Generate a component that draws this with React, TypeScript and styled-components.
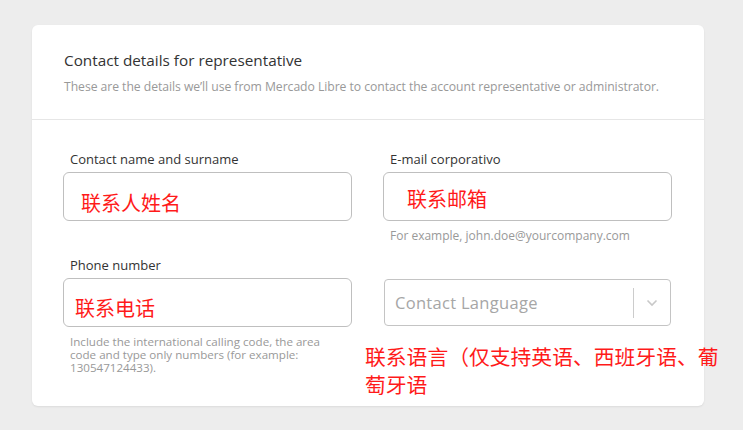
import styled, { createGlobalStyle } from "styled-components"

const GlobalStyle = createGlobalStyle`
    body {
        margin: 0;
        background: #ededed;
        font-family: "Open Sans", "Liberation Sans", sans-serif;
    }
`

const Page = styled.div`
    padding: 25px 39px 0 32px;
    min-height: 430px;
    box-sizing: border-box;
`

const Card = styled.section`
    width: 672px;
    background: #fff;
    border-radius: 6px;
    box-shadow: 0 1px 2px rgba(0, 0, 0, 0.08);
`

const Header = styled.header`
    padding: 25px 32px 24px;
    border-bottom: 1px solid #e6e6e6;
`

const Title = styled.h2`
    margin: 0;
    font-size: 15.3px;
    line-height: 20px;
    font-weight: 400;
    color: #333;
`

const Subtitle = styled.p`
    margin: 9px 0 0;
    font-size: 12.2px;
    line-height: 16px;
    color: #999;
    letter-spacing: -0.05px;
    white-space: nowrap;
`

const Body = styled.div`
    display: grid;
    grid-template-columns: 289px 289px;
    column-gap: 31px;
    row-gap: 15px;
    padding: 31px 32px 32px 31px;
`

const Field = styled.div`
    display: flex;
    flex-direction: column;
`

const Label = styled.label`
    font-size: 13px;
    color: #333;
    padding-left: 7px;
    line-height: 16px;
    margin-bottom: 5px;
`

const InputBox = styled.div<{ $indent: number; $drop: number }>`
    height: 49px;
    box-sizing: border-box;
    border: 1px solid #bfbfbf;
    border-radius: 6px;
    display: flex;
    align-items: center;
    padding: ${p => p.$drop}px 0 0 ${p => p.$indent}px;
`

const Value = styled.span`
    font-family: "Noto Sans CJK SC", sans-serif;
    font-size: 20px;
    color: #ff1a1a;
`

const Help = styled.p<{ $narrow?: boolean }>`
    margin: 8px 0 0;
    padding: 0 ${p => (p.$narrow ? 14 : 0)}px 0 7px;
    font-size: ${p => (p.$narrow ? 11.6 : 12)}px;
    line-height: 13px;
    color: #999;
`

const SelectBox = styled.div`
    margin: 1px 1px 0;
    height: 47px;
    box-sizing: border-box;
    border: 1px solid #c4c4c4;
    border-radius: 4px;
    display: flex;
    align-items: center;
`

const Placeholder = styled.span`
    flex: 1;
    padding-left: 10px;
    font-size: 16.5px;
    letter-spacing: 0.3px;
    color: #a6a6a6;
`

const Divider = styled.span`
    width: 1px;
    height: 30px;
    background: #ccc;
`

const Chevron = styled.span`
    width: 36px;
    display: flex;
    justify-content: center;
    svg {
        display: block;
    }
`

const Note = styled.p`
    margin: 16px 0 -24px -18px;
    width: 362px;
    font-family: "Noto Sans CJK SC", sans-serif;
    font-size: 20.8px;
    line-height: 28px;
    color: #ff1a1a;
`

function App() {
    return (
        <Page>
            <GlobalStyle />
            <Card>
                <Header>
                    <Title>Contact details for representative</Title>
                    <Subtitle>These are the details we’ll use from Mercado Libre to contact the account representative or administrator.</Subtitle>
                </Header>
                <Body>
                    <Field>
                        <Label>Contact name and surname</Label>
                        <InputBox $indent={17} $drop={11}>
                            <Value>联系人姓名</Value>
                        </InputBox>
                    </Field>
                    <Field>
                        <Label>E-mail corporativo</Label>
                        <InputBox $indent={23} $drop={4}>
                            <Value>联系邮箱</Value>
                        </InputBox>
                        <Help>For example, john.doe@yourcompany.com</Help>
                    </Field>
                    <Field>
                        <Label>Phone number</Label>
                        <InputBox $indent={11} $drop={9}>
                            <Value>联系电话</Value>
                        </InputBox>
                        <Help $narrow>Include the international calling code, the area code and type only numbers (for example: 130547124433).</Help>
                    </Field>
                    <Field>
                        <Label>&nbsp;</Label>
                        <SelectBox>
                            <Placeholder>Contact Language</Placeholder>
                            <Divider />
                            <Chevron>
                                <svg width="12" height="8" viewBox="0 0 12 8">
                                    <path d="M1.5 1.5 L6 6 L10.5 1.5" fill="none" stroke="#c8c8c8" strokeWidth="1.6" />
                                </svg>
                            </Chevron>
                        </SelectBox>
                        <Note>联系语言（仅支持英语、西班牙语、葡萄牙语</Note>
                    </Field>
                </Body>
            </Card>
        </Page>
    )
}

export default App
